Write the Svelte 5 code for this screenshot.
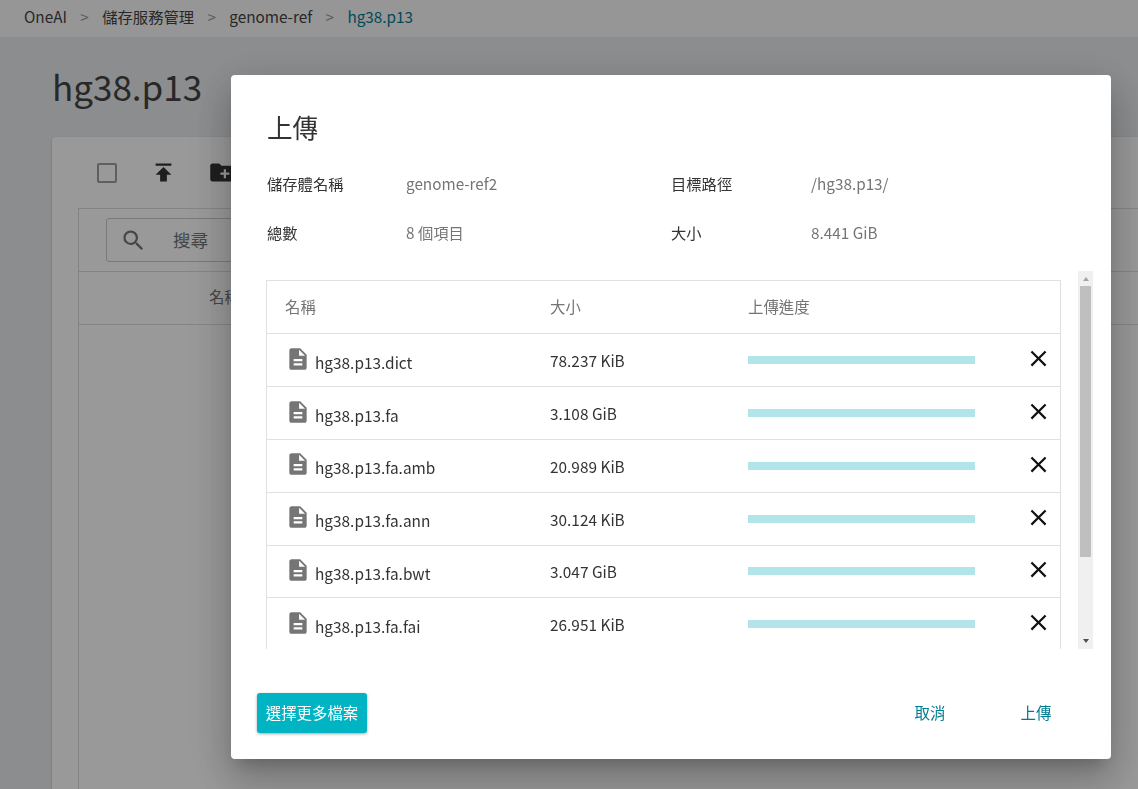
<script>
  const files = [
    { name: 'hg38.p13.dict', size: '78.237 KiB' },
    { name: 'hg38.p13.fa', size: '3.108 GiB' },
    { name: 'hg38.p13.fa.amb', size: '20.989 KiB' },
    { name: 'hg38.p13.fa.ann', size: '30.124 KiB' },
    { name: 'hg38.p13.fa.bwt', size: '3.047 GiB' },
    { name: 'hg38.p13.fa.fai', size: '26.951 KiB' },
    { name: 'hg38.p13.fa.pac', size: '790.2 MiB' },
    { name: 'hg38.p13.fa.sa', size: '1.580 GiB' }
  ];
</script>

<div class="page">
  <header class="topbar">
    <span>OneAI</span><span class="sep">&gt;</span>
    <span>儲存服務管理</span><span class="sep">&gt;</span>
    <span>genome-ref</span><span class="sep">&gt;</span>
    <span class="current">hg38.p13</span>
  </header>
  <main class="content">
    <h1>hg38.p13</h1>
    <section class="card">
      <div class="toolbar">
        <span class="checkbox"></span>
        <svg class="tool" viewBox="0 0 24 24"><path d="M5 4v2h14V4H5zm0 10h4v6h6v-6h4l-7-7-7 7z" /></svg>
        <svg class="tool" viewBox="0 0 24 24"><path d="M20 6h-8l-2-2H4c-1.11 0-2 .89-2 2v12c0 1.11.89 2 2 2h16c1.11 0 2-.89 2-2V8c0-1.11-.89-2-2-2zm-1 8h-3v3h-2v-3h-3v-2h3V9h2v3h3v2z" /></svg>
      </div>
      <div class="browser">
        <div class="searchrow">
          <div class="search">
            <svg viewBox="0 0 24 24"><path d="M15.5 14h-.79l-.28-.27A6.471 6.471 0 0 0 16 9.5 6.5 6.5 0 1 0 9.5 16c1.61 0 3.09-.59 4.23-1.57l.27.28v.79l5 4.99L20.49 19l-4.99-5zm-6 0C7.01 14 5 11.99 5 9.5S7.01 5 9.5 5 14 7.01 14 9.5 11.99 14 9.5 14z" /></svg>
            <span>搜尋</span>
          </div>
        </div>
        <div class="headrow"><span>名稱</span></div>
      </div>
    </section>
  </main>
</div>

<div class="backdrop"></div>

<div class="dialog">
  <h2>上傳</h2>
  <dl class="meta">
    <dt>儲存體名稱</dt><dd>genome-ref2</dd>
    <dt>目標路徑</dt><dd>/hg38.p13/</dd>
    <dt>總數</dt><dd>8 個項目</dd>
    <dt>大小</dt><dd>8.441 GiB</dd>
  </dl>
  <div class="tablewrap">
    <div class="scroller">
      <div class="table">
        <div class="row head">
          <span class="c-name">名稱</span>
          <span>大小</span>
          <span>上傳進度</span>
          <span></span>
        </div>
        {#each files as file}
          <div class="row">
            <span class="c-name file">
              <svg viewBox="0 0 24 24"><path d="M14 2H6c-1.1 0-1.99.9-1.99 2L4 20c0 1.1.89 2 1.99 2H18c1.1 0 2-.9 2-2V8l-6-6zm2 16H8v-2h8v2zm0-4H8v-2h8v2zm-3-5V3.5L18.5 9H13z" /></svg>
              <span>{file.name}</span>
            </span>
            <span class="size">{file.size}</span>
            <span class="bar"></span>
            <svg class="close" viewBox="0 0 24 24"><path d="M19 6.41 17.59 5 12 10.59 6.41 5 5 6.41 10.59 12 5 17.59 6.41 19 12 13.41 17.59 19 19 17.59 13.41 12z" /></svg>
          </div>
        {/each}
      </div>
    </div>
    <div class="scrollbar">
      <span class="arrow up"></span>
      <span class="thumb"></span>
      <span class="arrow down"></span>
    </div>
  </div>
  <footer class="actions">
    <button class="primary">選擇更多檔案</button>
    <div class="right">
      <button class="text">取消</button>
      <button class="text">上傳</button>
    </div>
  </footer>
</div>

<style>
  :global(body) {
    margin: 0;
    font-family: "Noto Sans CJK TC", "Noto Sans", sans-serif;
    overflow: hidden;
  }
  .page {
    height: 789px;
    overflow: hidden;
    background: #e9ecef;
    color: #444;
  }
  .topbar {
    height: 37px;
    box-sizing: border-box;
    padding: 0 0 5px 24px;
    display: flex;
    align-items: center;
    gap: 13.4px;
    background: #fafafa;
    font-size: 15.3px;
  }
  .sep { color: #9e9e9e; }
  .current { color: #007c91; }
  .content { padding: 0 0 0 52px; }
  h1 {
    margin: 0;
    padding-top: 24px;
    height: 100px;
    box-sizing: border-box;
    font-size: 35px;
    font-weight: 400;
    line-height: 50px;
  }
  .card {
    height: 652px;
    background: #fff;
    border-radius: 4px 0 0 0;
    padding: 0 0 0 26px;
    box-shadow: 0 1px 3px rgba(0, 0, 0, 0.2);
  }
  .toolbar {
    height: 71px;
    display: flex;
    align-items: center;
    padding-left: 19px;
    gap: 33px;
  }
  .checkbox {
    width: 16px;
    height: 16px;
    border: 2px solid #9e9e9e;
    border-radius: 2px;
  }
  .tool { width: 27px; height: 27px; fill: #333; }
  .tool + .tool { margin-left: -2px; }
  .browser {
    height: 581px;
    box-sizing: border-box;
    border-top: 1px solid #ddd;
    border-left: 1px solid #ddd;
  }
  .searchrow {
    height: 63px;
    box-sizing: border-box;
    padding: 9px 0 0 27px;
    border-bottom: 1px solid #ddd;
  }
  .search {
    width: 300px;
    height: 44px;
    box-sizing: border-box;
    border: 1px solid #ccc;
    border-radius: 3px;
    display: flex;
    align-items: center;
    padding-left: 13px;
    gap: 26px;
    font-size: 17.6px;
    color: #757575;
  }
  .search span { margin-bottom: 2px; }
  .search svg { width: 27px; height: 27px; fill: #757575; }
  .headrow {
    height: 53px;
    box-sizing: border-box;
    padding: 13px 0 0 130px;
    border-bottom: 1px solid #ddd;
    font-size: 15.4px;
    color: #757575;
  }
  .backdrop {
    position: fixed;
    inset: 0;
    background: rgba(0, 0, 0, 0.4);
  }
  .dialog {
    position: fixed;
    left: 231px;
    top: 75px;
    width: 880px;
    height: 684px;
    box-sizing: border-box;
    padding: 0 18px 0 36px;
    background: #fff;
    border-radius: 4px;
    color: #333;
    box-shadow: 0 11px 15px -7px rgba(0, 0, 0, 0.2), 0 24px 38px 3px rgba(0, 0, 0, 0.14), 0 9px 46px 8px rgba(0, 0, 0, 0.12);
  }
  h2 {
    margin: 0;
    padding-top: 30px;
    height: 79px;
    box-sizing: border-box;
    font-size: 25.6px;
    font-weight: 400;
    line-height: 44px;
  }
  .meta {
    margin: 0;
    display: grid;
    grid-template-columns: 139px 265px 140px 1fr;
    grid-auto-rows: 49px;
    height: 117px;
    font-size: 15.3px;
    line-height: 22px;
    padding-top: 18px;
    box-sizing: border-box;
  }
  dd { margin: 0; color: #757575; }
  .tablewrap {
    display: flex;
    justify-content: space-between;
    height: 378px;
    margin-left: -1px;
  }
  .scroller {
    width: 795px;
    overflow-y: auto;
    box-sizing: border-box;
    padding-top: 9px;
  }
  .scrollbar {
    width: 15px;
    background: #f0f0f0;
    display: flex;
    flex-direction: column;
    align-items: center;
  }
  .arrow {
    box-sizing: border-box;
    height: 4px;
    border-left: 3.5px solid transparent;
    border-right: 3.5px solid transparent;
  }
  .arrow.up {
    margin: 6px 0 5px;
    border-bottom: 4px solid #a3a3a3;
  }
  .arrow.down {
    border-top: 4px solid #505050;
    margin-top: 82px;
  }
  .thumb {
    width: 11px;
    height: 271px;
    background: #bfbfbf;
  }
  .table {
    box-sizing: border-box;
    border: 1px solid #e0e0e0;
    border-bottom: 0;
  }
  .row {
    display: grid;
    grid-template-columns: 283px 198px 227px 85px;
    align-items: center;
    height: 52.8px;
    box-sizing: border-box;
    border-bottom: 1px solid #e0e0e0;
    font-size: 15.4px;
  }
  .row.head {
    height: 53.4px;
    color: #757575;
    padding-bottom: 3px;
  }
  .c-name { padding-left: 18px; }
  .file {
    display: flex;
    align-items: center;
    gap: 4px;
  }
  .file svg { width: 26px; height: 26px; fill: #757575; margin-top: -3px; flex: none; }
  .file span { margin-top: 3px; }
  .bar { height: 8px; background: #b2e5e9; }
  .close { width: 27px; height: 27px; margin-left: 50px; fill: #111; margin-top: -3px; }
  .actions {
    display: flex;
    justify-content: space-between;
    margin: 44px 0 0 -10px;
    padding-right: 19px;
    height: 40px;
  }
  button {
    font: inherit;
    font-size: 15.4px;
    border: 0;
    background: none;
    padding: 0 0 3px;
    height: 40px;
  }
  .primary {
    width: 110px;
    background: #00b4c4;
    color: #fff;
    border-radius: 3px;
    box-shadow: 0 1px 3px rgba(0, 0, 0, 0.35);
  }
  .right { display: flex; gap: 30px; }
  .text { width: 76px; color: #007c91; }
</style>
